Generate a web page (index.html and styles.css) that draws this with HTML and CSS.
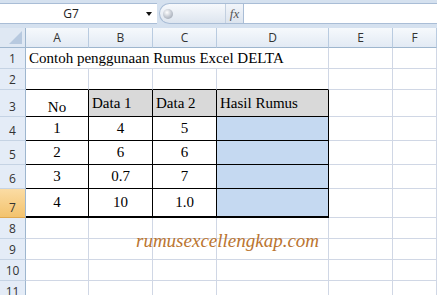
FILE: index.html
```html
<!DOCTYPE html>
<html lang="id">
<head>
    <meta charset="UTF-8">
    <title>Rumus Excel DELTA</title>
    <link rel="stylesheet" href="styles.css">
</head>
<body>
    <div class="formula-bar">
        <div class="name-box">
            <span class="cell-ref">G7</span>
            <span class="drop"></span>
        </div>
        <div class="pill">
            <span class="knob"></span>
            <span class="fx">fx</span>
        </div>
        <div class="formula-input"></div>
    </div>

    <div class="sheet">
        <!-- column headers -->
        <div class="corner"><span class="tri"></span></div>
        <div class="col-head">A</div>
        <div class="col-head">B</div>
        <div class="col-head">C</div>
        <div class="col-head">D</div>
        <div class="col-head">E</div>
        <div class="col-head">F</div>

        <div class="row-head">1</div>
        <div class="cell title">Contoh penggunaan Rumus Excel DELTA</div>
        <div class="cell"></div>
        <div class="cell"></div>

        <div class="row-head">2</div>
        <div class="cell top-edge"></div>
        <div class="cell top-edge"></div>
        <div class="cell top-edge"></div>
        <div class="cell top-edge"></div>
        <div class="cell"></div>
        <div class="cell"></div>

        <div class="row-head">3</div>
        <div class="cell tb mid bottom">No</div>
        <div class="cell tb grey">Data 1</div>
        <div class="cell tb grey">Data 2</div>
        <div class="cell tb grey">Hasil Rumus</div>
        <div class="cell"></div>
        <div class="cell"></div>

        <div class="row-head">4</div>
        <div class="cell tb mid">1</div>
        <div class="cell tb mid">4</div>
        <div class="cell tb mid">5</div>
        <div class="cell tb blue"></div>
        <div class="cell"></div>
        <div class="cell"></div>

        <div class="row-head">5</div>
        <div class="cell tb mid">2</div>
        <div class="cell tb mid">6</div>
        <div class="cell tb mid">6</div>
        <div class="cell tb blue"></div>
        <div class="cell"></div>
        <div class="cell"></div>

        <div class="row-head">6</div>
        <div class="cell tb mid">3</div>
        <div class="cell tb mid">0.7</div>
        <div class="cell tb mid">7</div>
        <div class="cell tb blue"></div>
        <div class="cell"></div>
        <div class="cell"></div>

        <div class="row-head active">7</div>
        <div class="cell tb mid last">4</div>
        <div class="cell tb mid last">10</div>
        <div class="cell tb mid last">1.0</div>
        <div class="cell tb blue last"></div>
        <div class="cell"></div>
        <div class="cell"></div>

        <div class="row-head">8</div>
        <div class="cell"></div><div class="cell"></div><div class="cell"></div>
        <div class="cell"></div><div class="cell"></div><div class="cell"></div>

        <div class="row-head">9</div>
        <div class="cell"></div><div class="cell"></div><div class="cell"></div>
        <div class="cell"></div><div class="cell"></div><div class="cell"></div>

        <div class="row-head">10</div>
        <div class="cell"></div><div class="cell"></div><div class="cell"></div>
        <div class="cell"></div><div class="cell"></div><div class="cell"></div>

        <div class="row-head">11</div>
        <div class="cell"></div><div class="cell"></div><div class="cell"></div>
        <div class="cell"></div><div class="cell"></div><div class="cell"></div>

        <span class="watermark">rumusexcellengkap.com</span>
    </div>
</body>
</html>
```

FILE: styles.css
```css
html, body {
    margin: 0;
    padding: 0;
    overflow: hidden;
    background: #fff;
}
body {
    width: 437px;
    height: 295px;
}

/* formula bar */
.formula-bar {
    display: flex;
    height: 28px;
    padding-top: 3px;
    padding-bottom: 4px;
    box-sizing: border-box;
    background: #d5e1ef;
}
.name-box {
    width: 157px;
    display: flex;
    align-items: center;
    background: #fff;
    border-top: 1px solid #a9bdd6;
    border-bottom: 1px solid #a9bdd6;
    box-sizing: border-box;
    font-family: "Open Sans", "Noto Sans", sans-serif;
    font-size: 12px;
    color: #222;
}
.cell-ref {
    flex: 1;
    text-align: center;
    padding-right: 4px;
}
.drop {
    width: 0;
    height: 0;
    border-left: 3px solid transparent;
    border-right: 3px solid transparent;
    border-top: 4px solid #111;
    margin-right: 5px;
}
.pill {
    width: 84px;
    margin-left: 2px;
    display: flex;
    align-items: center;
    justify-content: space-between;
    border: 1px solid #a9bdd6;
    border-right: none;
    border-radius: 11px 0 0 11px;
    background: linear-gradient(#f7f9fc, #dde5ef);
    box-sizing: border-box;
}
.knob {
    width: 10px;
    height: 10px;
    margin-left: 3px;
    border-radius: 50%;
    background: radial-gradient(circle at 40% 35%, #fff 0, #c9ced6 45%, #8f98a5 100%);
}
.fx {
    width: 17px;
    height: 100%;
    display: flex;
    align-items: center;
    justify-content: center;
    font-family: "Liberation Serif", serif;
    font-style: italic;
    font-size: 13px;
    color: #555;
    border-left: 1px solid #c3d0e0;
    background: linear-gradient(#f2f5fa, #dce4ee);
}
.formula-input {
    flex: 1;
    background: #fff;
    border: 1px solid #a9bdd6;
    border-right: none;
    box-sizing: border-box;
}

/* sheet grid */
.sheet {
    position: relative;
    display: grid;
    grid-template-columns: 26px 63px 64px 64px 112px 64px 44px;
    grid-template-rows: 20px 21px 21px 27px 24px 24px 24px 29px 21px 21px 21px 21px;
    font-family: "Liberation Serif", "Times New Roman", serif;
    font-size: 15px;
    color: #000;
}
.corner {
    position: relative;
    background: #dfe8f3;
    border-right: 1px solid #9eb6ce;
    border-bottom: 1px solid #9eb6ce;
    box-sizing: border-box;
}
.tri {
    position: absolute;
    right: 3px;
    bottom: 3px;
    width: 0;
    height: 0;
    border-left: 13px solid transparent;
    border-bottom: 13px solid #b7c9df;
}
.col-head {
    display: flex;
    align-items: center;
    justify-content: center;
    background: linear-gradient(#f6f9fc, #e2eaf4);
    border-right: 1px solid #b9cbe0;
    border-bottom: 1px solid #9eb6ce;
    box-sizing: border-box;
    font-family: "Open Sans", "Noto Sans", sans-serif;
    font-size: 12px;
    color: #333;
}
.row-head {
    display: flex;
    align-items: flex-end;
    justify-content: center;
    padding-bottom: 1px;
    background: #e4ecf7;
    border-right: 1px solid #9eb6ce;
    border-bottom: 1px solid #c5d3e4;
    box-sizing: border-box;
    font-family: "Open Sans", "Noto Sans", sans-serif;
    font-size: 12px;
    color: #333;
}
.row-head.active {
    background: linear-gradient(#fbdca4, #f3c36e);
    border-bottom-color: #e0a950;
}
.cell {
    display: flex;
    align-items: center;
    padding: 0 3px;
    border-right: 1px solid #d0d7e5;
    border-bottom: 1px solid #d0d7e5;
    box-sizing: border-box;
    white-space: nowrap;
}
.title {
    grid-column: 2 / 6;
    align-items: flex-end;
    padding-bottom: 1px;
}
.top-edge {
    border-bottom-color: #000;
}
.tb {
    border-right-color: #000;
    border-bottom-color: #000;
}
.tb.last {
    border-bottom-width: 2px;
}
.mid {
    justify-content: center;
}
.bottom {
    align-items: flex-end;
    padding-bottom: 0;
}
.grey {
    background: #d9d9d9;
}
.blue {
    background: #c5d9f1;
}

.watermark {
    position: absolute;
    left: 136px;
    top: 202px;
    font-family: "Liberation Serif", serif;
    font-style: italic;
    font-size: 19px;
    color: #bb7530;
    white-space: nowrap;
}
```
